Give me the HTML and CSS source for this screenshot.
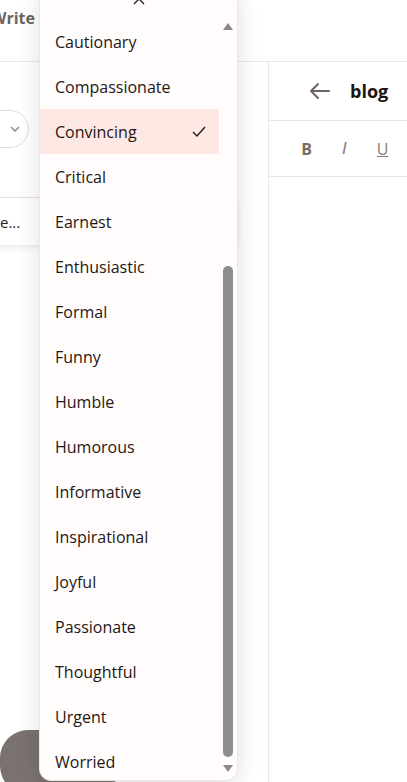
FILE: index.html
```html
<!DOCTYPE html>
<html lang="en">
<head>
    <meta charset="UTF-8">
    <meta name="viewport" content="width=device-width, initial-scale=1.0">
    <title>Write</title>
    <link rel="stylesheet" href="styles.css">
</head>
<body>
    <header class="topbar">
        <span class="brand">Write</span>
    </header>
    <main class="workspace">
        <section class="settings">
            <div class="chip-row">
                <button class="chip">
                    <svg width="10" height="8" viewBox="0 0 10 8"><polyline points="1,2 5,6 9,2" fill="none" stroke="#8a807c" stroke-width="1.3"/></svg>
                </button>
                <button class="chip"></button>
            </div>
            <div class="select-field">e...</div>
            <button class="generate"></button>
        </section>
        <section class="editor">
            <div class="editor-head">
                <svg class="back" width="22" height="18" viewBox="0 0 22 18"><path d="M20 9H2M9 2L2 9l7 7" fill="none" stroke="#6f6461" stroke-width="2" stroke-linecap="round" stroke-linejoin="round"/></svg>
                <h1>blog</h1>
            </div>
            <div class="toolbar">
                <span class="tool bold">B</span>
                <span class="tool italic">I</span>
                <span class="tool underline">U</span>
            </div>
        </section>
    </main>

    <!-- tone dropdown, open -->
    <div class="menu">
        <svg class="menu-close" width="14" height="14" viewBox="0 0 14 14"><path d="M2 2l10 10M12 2L2 12" stroke="#2a2220" stroke-width="1.4"/></svg>
        <ul class="options">
            <li>Cautionary</li>
            <li>Compassionate</li>
            <li class="selected">Convincing
                <svg width="14" height="12" viewBox="0 0 14 12"><polyline points="1,6 5,10 13,1" fill="none" stroke="#2a2220" stroke-width="1.5"/></svg>
            </li>
            <li>Critical</li>
            <li>Earnest</li>
            <li>Enthusiastic</li>
            <li>Formal</li>
            <li>Funny</li>
            <li>Humble</li>
            <li>Humorous</li>
            <li>Informative</li>
            <li>Inspirational</li>
            <li>Joyful</li>
            <li>Passionate</li>
            <li>Thoughtful</li>
            <li>Urgent</li>
            <li>Worried</li>
        </ul>
        <div class="scrollbar">
            <span class="arrow up"></span>
            <div class="track">
                <div class="thumb" style="margin-top: 230px;"></div>
            </div>
            <span class="arrow down"></span>
        </div>
    </div>
</body>
</html>
```

FILE: styles.css
```css
body {
    margin: 0;
    background-color: #fff;
    font-family: "Open Sans", "Noto Sans", sans-serif;
    color: #1f1715;
    overflow: hidden;
    height: 782px;
}

.topbar {
    height: 61px;
    border-bottom: 1px solid #ebe6e4;
    display: flex;
    align-items: flex-start;
}

.brand {
    margin-left: -9px;
    margin-top: 7px;
    font-size: 16px;
    font-weight: 700;
    color: #6d6461;
}

.workspace {
    display: flex;
    height: 720px;
}

.settings {
    width: 268px;
    border-right: 1px solid #ebe6e4;
    display: flex;
    flex-direction: column;
}

.chip-row {
    display: flex;
    gap: 10px;
    margin-top: 48px;
    margin-left: -19px;
}

.chip {
    width: 48px;
    height: 38px;
    border-radius: 19px;
    border: 1px solid #e2dcda;
    background-color: #fff;
    padding: 0 0 0 20px;
    display: flex;
    align-items: center;
    justify-content: center;
}

.select-field {
    margin-top: 49px;
    margin-left: -12px;
    width: 250px;
    height: 48px;
    box-sizing: border-box;
    border-top: 1px solid #e4dedc;
    border-right: 1px solid #e4dedc;
    border-radius: 4px;
    box-shadow: 0 3px 6px rgba(0, 0, 0, 0.08);
    padding-left: 12px;
    display: flex;
    align-items: center;
    font-size: 15px;
    color: #2a2220;
}

.generate {
    margin-top: auto;
    margin-bottom: -12px;
    margin-left: 0;
    width: 120px;
    height: 64px;
    border: none;
    border-radius: 28px;
    background-color: #7a726f;
}

.editor {
    flex: 1;
}

.editor-head {
    height: 58px;
    border-bottom: 1px solid #ebe6e4;
    display: flex;
    align-items: center;
    padding-left: 40px;
    gap: 19px;
}

.editor-head h1 {
    margin: 0;
    font-size: 18px;
    font-weight: 700;
    color: #1c1412;
}

.toolbar {
    height: 55px;
    border-bottom: 1px solid #ebe6e4;
    display: flex;
    align-items: center;
    padding-left: 31px;
    gap: 25px;
    font-size: 16px;
}

.tool {
    width: 13px;
    text-align: center;
    color: #8a7b74;
}

.bold {
    font-weight: 700;
    color: #7a6a62;
}

.italic {
    font-style: italic;
    font-family: "DejaVu Sans", sans-serif;
    font-weight: 300;
}

.underline {
    text-decoration: underline;
}

/* dropdown overlay */
.menu {
    position: absolute;
    left: 39px;
    top: -12px;
    width: 197px;
    height: 791px;
    background-color: #fffcfb;
    border: 1px solid #ece7e6;
    border-radius: 12px;
    box-shadow: 0 4px 22px rgba(0, 0, 0, 0.13);
    display: flex;
}

.menu-close {
    position: absolute;
    left: 92px;
    top: 3px;
}

.options {
    list-style: none;
    margin: 30px 0 0 0;
    padding: 0;
    width: 179px;
}

.options li {
    height: 45px;
    display: flex;
    align-items: center;
    justify-content: space-between;
    padding: 0 13px 0 15px;
    font-size: 16px;
}

.options li.selected {
    background-color: #fde8e3;
}

.scrollbar {
    width: 18px;
    display: flex;
    flex-direction: column;
    align-items: center;
    padding: 34px 0 8px 0;
}

.arrow {
    width: 0;
    height: 0;
    border-left: 5px solid transparent;
    border-right: 5px solid transparent;
}

.arrow.up {
    border-bottom: 7px solid #8a8a8a;
}

.arrow.down {
    border-top: 7px solid #8a8a8a;
    margin-top: 6px;
}

.track {
    flex: 1;
    width: 10px;
    padding-top: 6px;
}

.thumb {
    width: 10px;
    height: 491px;
    border-radius: 5px;
    background-color: #8d8d8d;
}
```
